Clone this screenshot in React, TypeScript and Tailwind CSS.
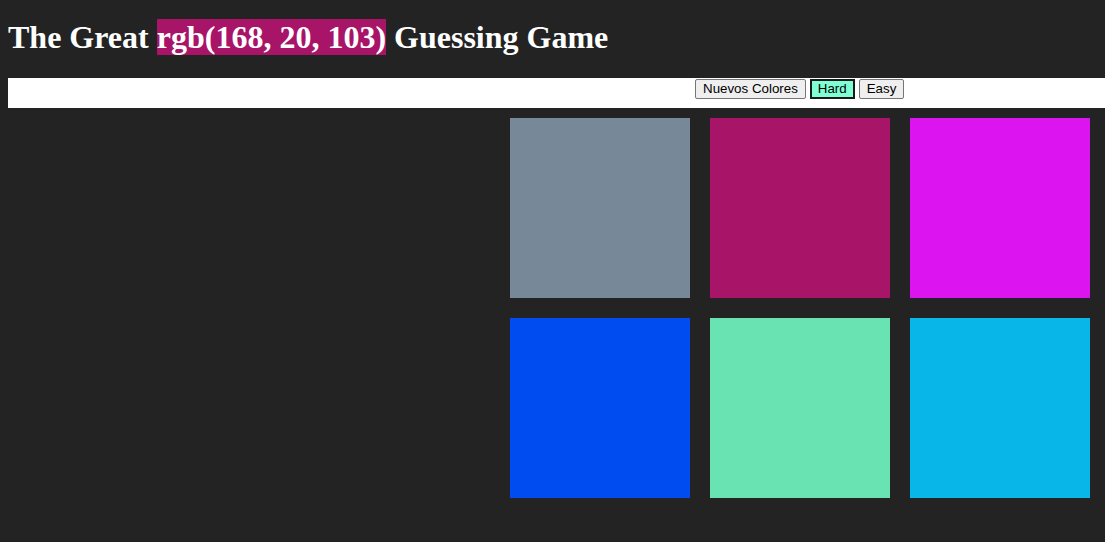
const colors = ["#778899", "#a81467", "#db14f0", "#014cf0", "#69e3b2", "#09b6e8"]

export default function App() {
  return (
    <div className="min-h-[542px] bg-[#232323] px-2 pb-2 overflow-hidden">
      <h1
        className="pt-[19px] text-[32px] font-bold leading-[36px] text-white"
        style={{ fontFamily: '"Liberation Serif", serif' }}
      >
        The Great <span className="bg-[#a81467]">rgb(168, 20, 103)</span> Guessing Game
      </h1>
      <div
        className="-mr-2 mt-[23px] flex h-[30px] items-start gap-1 bg-white pl-[687px] text-[13.33px]"
        style={{ fontFamily: '"Liberation Sans", Arial, sans-serif' }}
      >
        <button className="mt-px h-[20px] rounded-[2px] border border-[#767676] bg-[#efefef] px-[7px] leading-[18px] text-black">
          Nuevos Colores
        </button>
        <button className="mt-px h-[20px] border-2 border-[#1a1a1a] bg-[#7fffd4] px-[6px] leading-[16px] text-black">
          Hard
        </button>
        <button className="mt-px h-[20px] rounded-[2px] border border-[#767676] bg-[#efefef] px-[7px] leading-[18px] text-black">
          Easy
        </button>
      </div>
      <div className="ml-[492px] grid w-[600px] grid-cols-3">
        {colors.map((c, i) => (
          <div key={i} className="m-[10px] h-[180px] w-[180px]" style={{ backgroundColor: c }} />
        ))}
      </div>
    </div>
  )
}
